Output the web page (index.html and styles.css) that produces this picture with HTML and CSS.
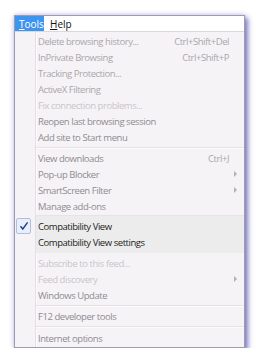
FILE: index.html
```html
<!DOCTYPE html>
<html>
<head>
  <title>Tools menu</title>
  <link rel="stylesheet" href="styles.css">
</head>
<body>
  <div class="window">
    <div class="menubar">
      <span class="top active"><u>T</u>ools</span>
      <span class="top"><u>H</u>elp</span>
    </div>

    <div class="menu">
      <div class="item off"><span>Delete browsing history...</span><span class="key">Ctrl+Shift+Del</span></div>
      <div class="item off"><span>InPrivate Browsing</span><span class="key">Ctrl+Shift+P</span></div>
      <div class="item off"><span>Tracking Protection...</span></div>
      <div class="item off"><span>ActiveX Filtering</span></div>
      <div class="item faint"><span>Fix connection problems...</span></div>
      <div class="item"><span>Reopen last browsing session</span></div>
      <div class="item"><span>Add site to Start menu</span></div>
      <div class="sep"></div>
      <div class="item"><span>View downloads</span><span class="key">Ctrl+J</span></div>
      <div class="item"><span>Pop-up Blocker</span><span class="arrow"></span></div>
      <div class="item"><span>SmartScreen Filter</span><span class="arrow"></span></div>
      <div class="item"><span>Manage add-ons</span></div>

      <div class="group">
        <div class="item dark">
          <span class="check">
            <svg width="10" height="10" viewBox="0 0 10 10"><path d="M1.5 5.2 L3.8 8 L8.6 1.4" fill="none" stroke="#1f3c9a" stroke-width="1.4"/></svg>
          </span>
          <span>Compatibility View</span>
        </div>
        <div class="item dark"><span>Compatibility View settings</span></div>
      </div>

      <div class="item faint gap"><span>Subscribe to this feed...</span></div>
      <div class="item faint"><span>Feed discovery</span><span class="arrow"></span></div>
      <div class="item"><span>Windows Update</span></div>
      <div class="sep"></div>
      <div class="item"><span>F12 developer tools</span></div>
      <div class="sep tall"></div>
      <div class="item"><span>Internet options</span></div>
    </div>
  </div>
</body>
</html>
```

FILE: styles.css
```css
body {
  margin: 0;
  padding: 0;
  background-color: #fff;
  font-family: 'Open Sans', 'Noto Sans', sans-serif;
  font-size: 9.5px;
  letter-spacing: -0.45px;
}

.window {
  margin: 15px 0 0 14px;
  width: 229px;
  border: 1px solid #9c9cae;
  background-color: #f6f3f6;
  box-shadow: 3px 3px 5px rgba(70, 70, 170, 0.65), 0 0 5px rgba(110, 110, 200, 0.4);
}

.menubar {
  display: flex;
  height: 15px;
  background-color: #fff;
  border-bottom: 1px solid #d8d8de;
}

.top {
  display: flex;
  align-items: center;
  padding: 0 6px 0 4px;
  color: #111;
  font-size: 10px;
  letter-spacing: 0;
}

.top.active {
  background-color: #3d95f0;
  color: #fff;
  width: 19px;
  margin-right: 2px;
}

.menu {
  padding: 1px 0 1px 0;
  background: linear-gradient(to right, #f6f3f6 20px, #e4dfe4 20px, #e4dfe4 21px, #fcfafc 21px, #fcfafc 22px, #f6f3f6 22px);
}

.item {
  position: relative;
  display: flex;
  align-items: center;
  justify-content: space-between;
  height: 16px;
  padding: 0 15px 0 23px;
  color: #8e8c90;
}

.item.off {
  color: #a9a7ab;
}

.item.faint {
  color: #c9c6ca;
}

.item.dark {
  color: #1d1d20;
}

.item.gap {
  margin-top: 2px;
}

.key {
  color: #a9a7ab;
}

.arrow {
  width: 0;
  height: 0;
  margin-right: -8px;
  border-top: 3px solid transparent;
  border-bottom: 3px solid transparent;
  border-left: 3px solid #b2b0b4;
}

.sep {
  height: 5px;
  margin-left: 21px;
  background: linear-gradient(#f6f3f6 2px, #e6e2e6 2px, #e6e2e6 3px, #fdfcfd 3px, #fdfcfd 4px, #f6f3f6 4px);
}

.sep.tall {
  height: 6px;
}

.group {
  margin: 1px 0 0 21px;
  padding: 2px 0 3px 0;
  border-top: 1px solid #e6e2e6;
  background-color: #ececed;
}

.group .item {
  padding-left: 2px;
}

.check {
  position: absolute;
  left: -20px;
  top: 0;
  width: 13px;
  height: 14px;
  display: flex;
  align-items: center;
  justify-content: center;
  border: 1px solid #aebfe0;
  border-radius: 2px;
  background-color: #e9eff9;
}
```
